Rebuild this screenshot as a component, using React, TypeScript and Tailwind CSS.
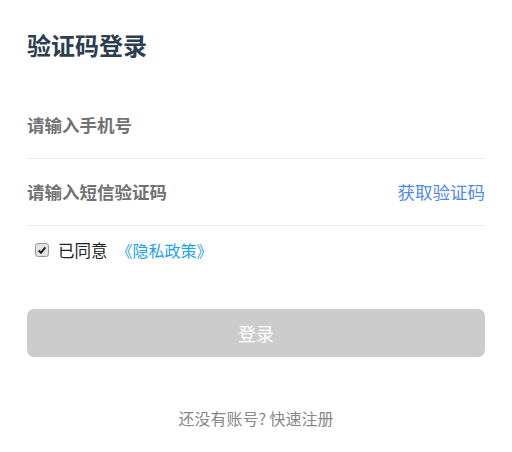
const font = { fontFamily: '"Noto Sans CJK SC", "Noto Sans", sans-serif' };

export default function App() {
  return (
    <div className="min-h-[452px] w-[512px] bg-white px-[27px]" style={font}>
      <h1 className="pt-[29px] text-[24px] font-bold leading-[32px] text-[#2c3e50]">
        验证码登录
      </h1>

      <div className="mt-[31px] flex h-[67px] items-center border-b border-[#ebebeb]">
        <input
          className="w-full bg-transparent text-[17.5px] font-semibold text-[#333] outline-none placeholder:text-[#727272]"
          placeholder="请输入手机号"
        />
      </div>

      <div className="flex h-[67px] items-center border-b border-[#ebebeb]">
        <input
          className="min-w-0 flex-1 bg-transparent text-[17.5px] font-semibold text-[#333] outline-none placeholder:text-[#727272]"
          placeholder="请输入短信验证码"
        />
        <span className="text-[17.5px] text-[#4d8af0]">获取验证码</span>
      </div>

      <div className="flex h-[48px] items-center pl-[8px]">
        <span className="flex h-[14px] w-[14px] items-center justify-center rounded-[3px] border border-[#999] bg-[#e4e4e4]">
          <svg viewBox="0 0 12 12" className="h-[10px] w-[10px]">
            <path d="M2 6.5 L4.8 9.2 L10 2.8" fill="none" stroke="#222" strokeWidth="2.4" />
          </svg>
        </span>
        <span className="ml-[9px] text-[16.5px] text-[#222]">已同意</span>
        <span className="ml-[9px] text-[16px] text-[#1e9ff0]">《隐私政策》</span>
      </div>

      <button className="mt-[35px] flex h-[48px] w-full items-center justify-center rounded-[7px] bg-[#cccccc] text-[18px] text-white">
        登录
      </button>

      <p className="mt-[50px] text-center text-[16px] leading-[22px] text-[#888]">
        还没有账号? 快速注册
      </p>
    </div>
  );
}
